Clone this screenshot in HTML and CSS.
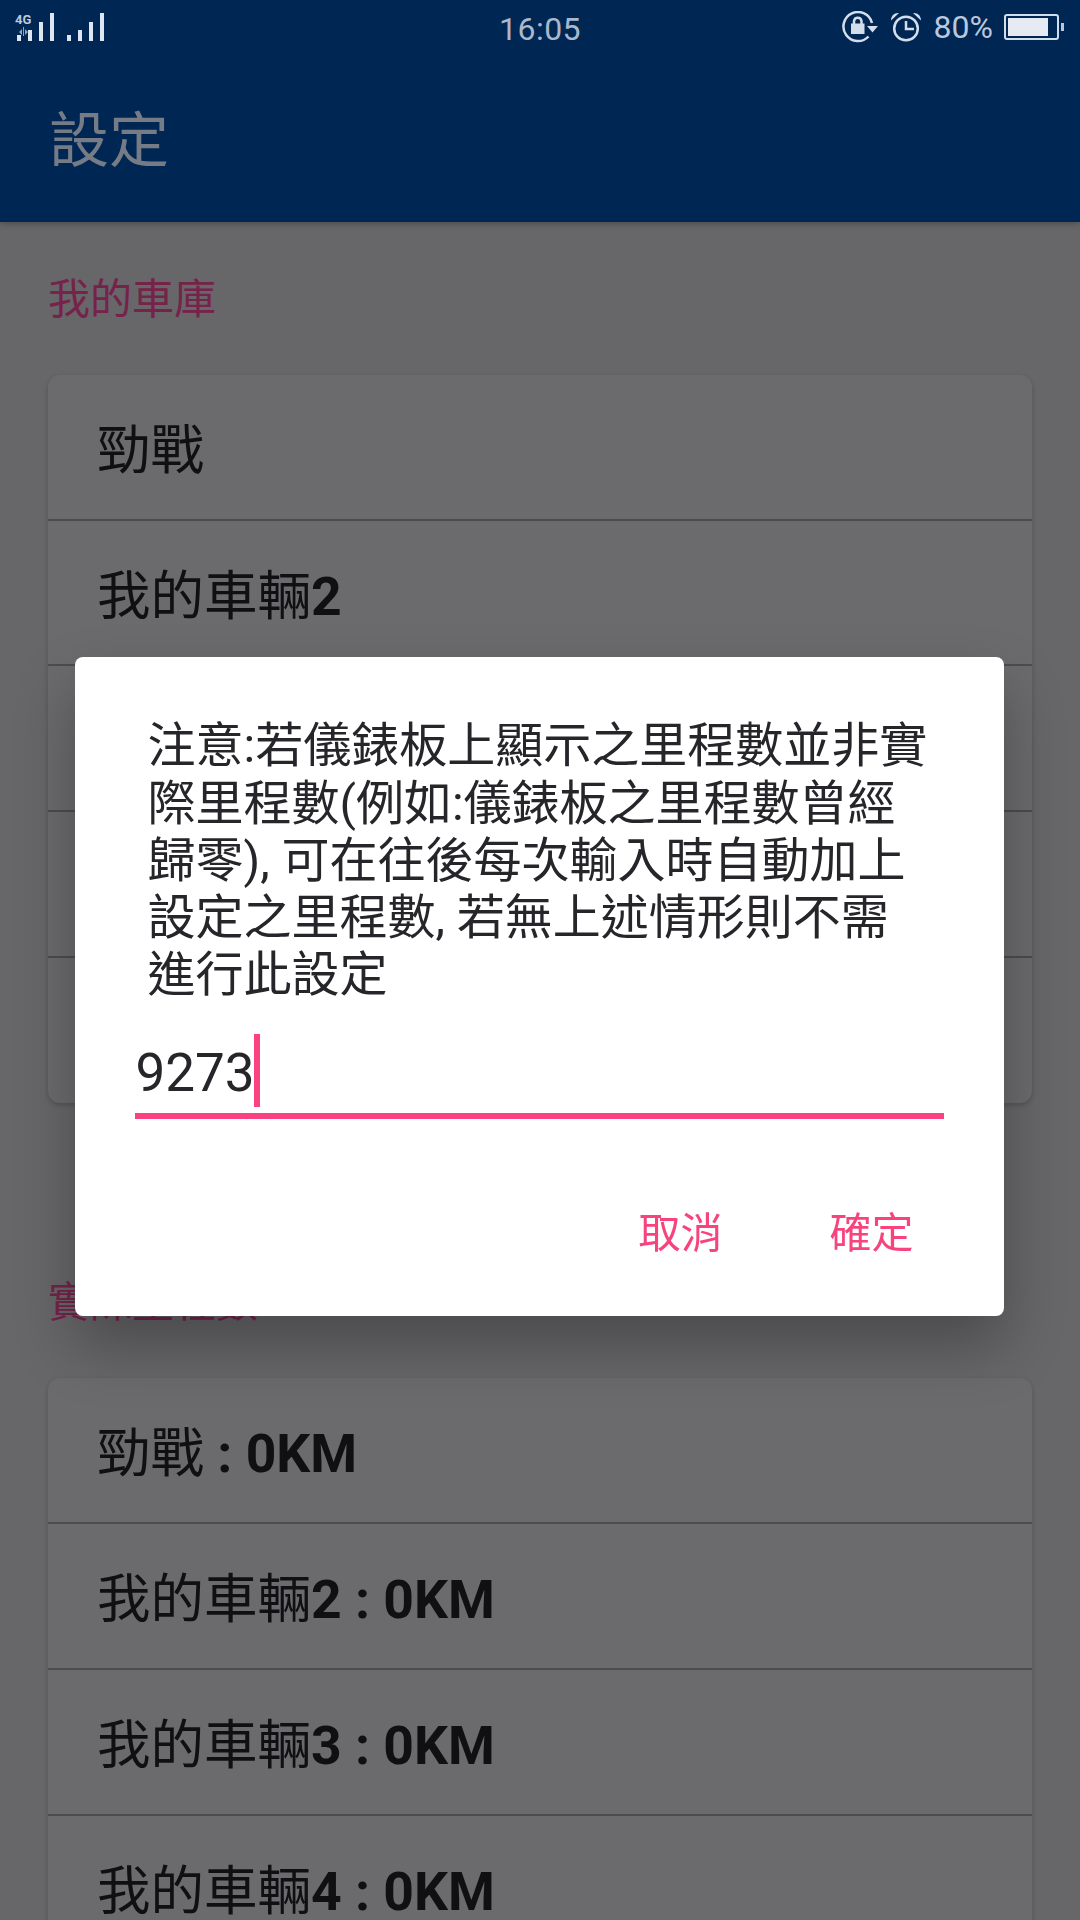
FILE: index.html
```html
<!DOCTYPE html>
<html lang="zh-Hant">
<head>
  <meta charset="UTF-8" />
  <meta name="viewport" content="width=device-width, initial-scale=1" />
  <title>設定</title>
  <link rel="stylesheet" href="styles.css">
</head>
<body>
  <header class="app-header">
    <div class="status-bar">
      <div class="status-left">
        <svg class="signal" width="96" height="32" viewBox="0 0 96 32">
          <text class="signal-type" x="0" y="11">4G</text>
          <path class="signal-arrows" d="M4 19l3-3v6zM8 14h1v9H8zM10 16l3 3-3 3z" />
          <rect x="2" y="22" width="4" height="6" />
          <rect x="13" y="17" width="4" height="11" />
          <rect x="24" y="9" width="4" height="19" />
          <rect x="35" y="0" width="4" height="28" />
          <rect x="52" y="22" width="4" height="6" />
          <rect x="63" y="17" width="4" height="11" />
          <rect x="74" y="9" width="4" height="19" />
          <rect x="85" y="0" width="4" height="28" />
        </svg>
      </div>
      <div class="status-time">16:05</div>
      <div class="status-right">
        <svg class="icon-rotate" width="36" height="32" viewBox="0 0 36 32">
          <path class="icon-line" d="M26.500 25.500A14.500 14.500 0 1 1 30 12" />
          <path class="icon-fill" d="M25 15h11l-5.500 6.500z" />
          <path class="icon-fill" d="M9 12.500h13.500v10.500H9z" />
          <path class="icon-line" d="M12 13v-3a3.800 3.800 0 0 1 7.500 0v3" />
        </svg>
        <svg class="icon-alarm" width="32" height="30" viewBox="0 0 32 30">
          <circle class="icon-line" cx="16" cy="16.500" r="11.800" />
          <path class="icon-line" d="M16 9v8h8" />
          <path class="icon-fill" d="M1 8.500C1 3.500 4.500 0.500 9 1zM31 8.500C31 3.500 27.500 0.500 23 1z" />
        </svg>
        <span class="status-battery-text">80%</span>
        <div class="battery">
          <div class="battery-body"><div class="battery-level"></div></div>
          <div class="battery-tip"></div>
        </div>
      </div>
    </div>
    <div class="toolbar">設定</div>
  </header>

  <main class="content">
    <section class="group">
      <h2 class="group-title">我的車庫</h2>
      <div class="card">
        <div class="card-row">勁戰</div>
        <div class="card-row">我的車輛<span class="row-num">2</span></div>
        <div class="card-row"></div>
        <div class="card-row"></div>
        <div class="card-row"></div>
      </div>
    </section>
    <section class="group">
      <h2 class="group-title">實際里程數</h2>
      <div class="card">
        <div class="card-row">勁戰<span class="row-num"> : 0KM</span></div>
        <div class="card-row">我的車輛<span class="row-num">2 : 0KM</span></div>
        <div class="card-row">我的車輛<span class="row-num">3 : 0KM</span></div>
        <div class="card-row">我的車輛<span class="row-num">4 : 0KM</span></div>
      </div>
    </section>
  </main>

  <div class="overlay">
    <div class="dialog" role="dialog">
      <p class="dialog-message">注意:若儀錶板上顯示之里程數並非實<br>際里程數(例如:儀錶板之里程數曾經<br>歸零), 可在往後每次輸入時自動加上<br>設定之里程數, 若無上述情形則不需<br>進行此設定</p>
      <div class="dialog-field">
        <span class="field-value">9273</span>
        <span class="field-cursor"></span>
      </div>
      <div class="dialog-actions">
        <span class="dialog-btn">取消</span>
        <span class="dialog-btn">確定</span>
      </div>
    </div>
  </div>
</body>
</html>
```

FILE: styles.css
```css
html, body {
  height: 1920px;
}
body {
  margin: 0;
  overflow: hidden;
  background: #676669;
  font-family: Roboto, "Noto Sans CJK TC", sans-serif;
  color: #100f12;
}
.app-header {
  height: 222px;
  background: #002654;
  box-shadow: 0 2px 6px rgba(0,0,0,0.25);
}
/* Status bar */
.status-bar {
  height: 58px;
  display: grid;
  grid-template-columns: 1fr auto 1fr;
  align-items: start;
  color: #b9c8dc;
}
.status-left {
  padding: 13px 0 0 15px;
}
.signal {
  display: block;
  fill: #dde6f2;
}
.signal-type {
  font-size: 13px;
  font-weight: 700;
  fill: #bccbe0;
}
.signal-arrows {
  fill: #8fa3bd;
}
.status-time {
  font-size: 32px;
  line-height: 58px;
  letter-spacing: 0.5px;
  color: #a9b8cc;
}
.status-right {
  display: flex;
  align-items: center;
  justify-content: flex-end;
  height: 54px;
  padding-right: 16px;
}
.icon-line {
  fill: none;
  stroke: #d4deeb;
  stroke-width: 2.500;
}
.icon-fill {
  fill: #d4deeb;
}
.icon-rotate {
  margin-right: 12px;
}
.icon-alarm {
  margin-right: 12px;
}
.status-battery-text {
  font-size: 32px;
  margin-right: 11px;
}
.battery {
  display: flex;
  align-items: center;
}
.battery-body {
  width: 55px;
  height: 26px;
  box-sizing: border-box;
  border: 2px solid #d4deeb;
  border-radius: 3px;
  padding: 2px;
}
.battery-level {
  width: 40px;
  height: 100%;
  background: #e6ebf3;
}
.battery-tip {
  width: 3px;
  height: 8px;
  margin-left: 2px;
  background: #b9c8dc;
}
.toolbar {
  padding: 4px 0 0 49px;
  font-size: 60px;
  line-height: 160px;
  color: #767c86;
}
/* Page content under the dialog */
.content {
  padding: 0 48px;
}
.group {
  padding-top: 48px;
}
.group-title {
  margin: 0 0 45px;
  font-size: 42px;
  font-weight: 400;
  line-height: 60px;
  color: #76224a;
}
.card {
  margin-bottom: 122px;
  background: #6b6a6d;
  border-radius: 12px;
  box-shadow: 0 2px 5px rgba(0,0,0,0.2);
  overflow: hidden;
}
.card-row {
  height: 145.700px;
  box-sizing: border-box;
  padding: 6px 0 0 49px;
  border-bottom: 2px solid #4c4b4e;
  font-size: 53.500px;
  line-height: 140px;
}
.card-row:last-child {
  border-bottom: none;
}
.row-num {
  font-weight: 700;
}
/* Dialog */
.overlay {
  position: fixed;
  top: 0;
  left: 0;
  right: 2px;
  bottom: 0;
  padding-top: 53px;
  box-sizing: border-box;
  display: flex;
  justify-content: center;
  align-items: center;
}
.dialog {
  width: 929px;
  box-sizing: border-box;
  padding: 60px 60px 62px;
  background: #fff;
  border-radius: 8px;
  box-shadow: 0 30px 60px rgba(0,0,0,0.28);
}
.dialog-message {
  margin: 0 0 0 13px;
  font-size: 48px;
  line-height: 57.300px;
  color: #26252a;
  white-space: nowrap;
}
.dialog-field {
  display: flex;
  align-items: flex-start;
  height: 73px;
  margin-top: 30px;
  padding-bottom: 6px;
  border-bottom: 6px solid #fb4182;
}
.field-value {
  padding: 3px 0 0 1px;
  font-size: 53px;
  line-height: 73px;
  color: #26252a;
}
.field-cursor {
  width: 6px;
  height: 73px;
  margin-left: -1px;
  background: #fb4182;
}
.dialog-actions {
  display: flex;
  justify-content: flex-end;
  gap: 107px;
  margin-top: 95px;
  padding-right: 30px;
}
.dialog-btn {
  font-size: 42px;
  line-height: 40px;
  color: #f7447f;
}
```
